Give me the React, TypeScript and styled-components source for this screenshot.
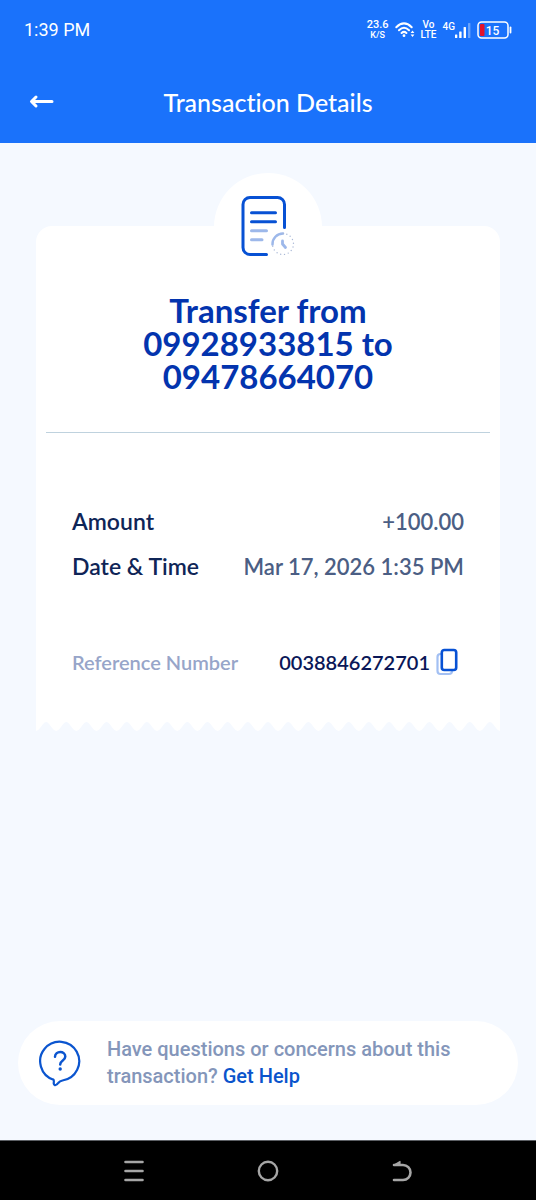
import React from "react";
import styled, { createGlobalStyle } from "styled-components";

const GlobalStyle = createGlobalStyle`
  *, *::before, *::after { box-sizing: border-box; }
  body { margin: 0; background: #f5f9ff; }
  button { border: 0; padding: 0; background: none; color: inherit; font: inherit; cursor: pointer; }
  svg { display: block; }
`;

const bodyFont = `Lato, "Liberation Sans", sans-serif`;
const systemFont = `Roboto, "Liberation Sans", sans-serif`;

const Page = styled.div`
  min-height: 100vh;
  display: flex;
  flex-direction: column;
  background: #f5f9ff;
  font-family: ${bodyFont};
  font-variant-ligatures: none;
`;

const Header = styled.header`
  background: #1a72fb;
  color: #fff;
`;

const StatusBar = styled.div`
  height: 60px;
  padding: 0 24px;
  display: flex;
  align-items: center;
  justify-content: space-between;
  font-family: ${systemFont};
`;

const Clock = styled.time`
  font-size: 18px;
  line-height: 24px;
`;

const StatusIcons = styled.div`
  display: flex;
  align-items: center;
  gap: 6px;
`;

const StackedLabel = styled.div`
  display: flex;
  flex-direction: column;
  align-items: center;
  font-size: 10px;
  line-height: 10px;
  font-weight: 500;
`;

const SpeedValue = styled.span`
  font-size: 11px;
`;

const SpeedUnit = styled.span`
  font-size: 9px;
`;

const Signal = styled.div`
  display: flex;
  align-items: flex-start;
  font-size: 10px;
  line-height: 10px;
  font-weight: 500;
`;

const TitleBar = styled.div`
  height: 83px;
  padding: 0 24px;
  display: grid;
  grid-template-columns: 36px 1fr 36px;
  align-items: center;
`;

const BackButton = styled.button`
  width: 36px;
  height: 36px;
  display: grid;
  place-items: center;
`;

const Title = styled.h1`
  margin: 0;
  font-size: 25px;
  line-height: 32px;
  font-weight: 500;
  text-align: center;
`;

const Main = styled.main`
  flex: 1;
  display: flex;
  flex-direction: column;
  padding: 30px 18px 35px;
`;

const Receipt = styled.article`
  margin: 0 18px 24px;
  display: flex;
  flex-direction: column;
`;

const Badge = styled.div`
  width: 108px;
  height: 108px;
  margin: 0 auto -55px;
  padding-top: 22px;
  border-radius: 50%;
  background: #fff;
  display: flex;
  justify-content: center;
  z-index: 1;
`;

const Paper = styled.div`
  padding: 68px 10px 43px;
  border-radius: 16px 16px 0 0;
  background: #fff;
`;

const Heading = styled.h2`
  margin: 0 auto;
  max-width: 280px;
  padding-bottom: 39px;
  color: #0334ae;
  font-size: 33px;
  line-height: 33px;
  font-weight: 700;
  text-align: center;
`;

const Divider = styled.hr`
  margin: 0;
  border: 0;
  border-top: 1px solid #bfd2de;
`;

const Details = styled.dl`
  margin: 0;
  padding: 72px 26px 0;
`;

const Row = styled.div<{ $gap?: number }>`
  display: flex;
  align-items: center;
  justify-content: space-between;
  height: 32px;
  margin-top: ${(p) => p.$gap ?? 0}px;
`;

const Term = styled.dt<{ $muted?: boolean }>`
  color: ${(p) => (p.$muted ? "#97a5c9" : "#0f2557")};
  font-size: ${(p) => (p.$muted ? 20 : 23)}px;
  font-weight: 600;
  white-space: nowrap;
`;

const Value = styled.dd<{ $strong?: boolean }>`
  margin: 0;
  display: flex;
  align-items: center;
  gap: 6px;
  padding-right: ${(p) => (p.$strong ? 6 : 0)}px;
  color: ${(p) => (p.$strong ? "#0a1757" : "#4b5e84")};
  font-size: ${(p) => (p.$strong ? 20 : 22)}px;
  font-weight: 600;
  white-space: nowrap;
`;

const TornEdge = styled.svg`
  width: 100%;
  height: 10px;
`;

const HelpCard = styled.aside`
  margin-top: auto;
  min-height: 84px;
  padding: 0 21px;
  display: flex;
  align-items: center;
  gap: 26px;
  border-radius: 42px;
  background: #fff;
`;

const HelpText = styled.p`
  margin: 0;
  max-width: 360px;
  color: #8496ba;
  font-family: ${systemFont};
  font-size: 20px;
  line-height: 27px;
  font-weight: 500;
`;

const HelpLink = styled.a`
  color: #0a54cc;
  text-decoration: none;
`;

const NavBar = styled.nav`
  height: 60px;
  padding: 0 67px;
  display: grid;
  grid-template-columns: repeat(3, 1fr);
  justify-items: center;
  align-items: center;
  background: #000;
  border-top: 1px solid #5c5f64;
  color: #a6a6a6;
`;

const NavButton = styled.button`
  width: 40px;
  height: 40px;
  display: grid;
  place-items: center;
`;

const TEETH = 23;
const tornPath =
  "M0 0V10" +
  Array.from({ length: TEETH }, (_, i) => {
    const x = i * 20;
    return `Q${x + 2} 10 ${x + 4} 7L${x + 7} 3Q${x + 10} -1 ${x + 13} 3L${x + 16} 7Q${x + 18} 10 ${x + 20} 10`;
  }).join("") +
  "V0Z";

const WifiIcon = () => (
  <svg width="20" height="18" viewBox="0 0 20 18" fill="none" stroke="#fff" strokeWidth="2" strokeLinecap="round" aria-label="Wi-Fi">
    <path d="M1.300 6.200Q9 -1.400 16.700 6.200M4 9.200Q9 4.400 14 9.200M6.600 12Q9 9.800 11.400 12" />
    <circle cx="9" cy="14.700" r="1.400" fill="#fff" stroke="none" />
    <path d="M17.500 9.500l1.900 2.400h-3.800zM17.500 16l1.900-2.400h-3.800z" fill="#fff" stroke="none" />
  </svg>
);

const BarsIcon = () => (
  <svg width="16" height="17" viewBox="0 0 16 17" fill="#fff" aria-label="Signal strength">
    <rect x="0" y="12.500" width="2.300" height="3.500" rx=".5" />
    <rect x="4.200" y="9.500" width="2.400" height="6.500" rx=".5" />
    <rect x="8.600" y="5" width="2.400" height="11" rx=".5" />
    <rect x="13" y="1" width="2.400" height="15" rx=".5" opacity=".35" />
  </svg>
);

const BatteryIcon = () => (
  <svg width="35" height="18" viewBox="0 0 35 18" aria-label="Battery 15 percent">
    <rect x="1" y="1" width="30" height="16" rx="3.500" fill="none" stroke="#fff" strokeWidth="1.500" />
    <rect x="3" y="3" width="4.500" height="12" rx="1" fill="#e3122c" />
    <path d="M33.500 6.500v5" stroke="#fff" strokeWidth="1.800" strokeLinecap="round" />
    <text x="15.500" y="13.500" textAnchor="middle" fill="#fff" fontFamily="Roboto, sans-serif" fontSize="12" fontWeight="500">15</text>
  </svg>
);

const BackArrow = () => (
  <svg width="26" height="16" viewBox="0 0 26 16" fill="none" stroke="#fff" strokeWidth="3" strokeLinecap="round" strokeLinejoin="round">
    <path d="M23 7.500H3M7 3L2.500 7.500L7 12" />
  </svg>
);

const ReceiptIcon = () => (
  <svg width="56" height="62" viewBox="0 0 56 62" fill="none" strokeLinecap="round">
    <path d="M26.500 59.500H10A7 7 0 0 1 3 52.500V9.500A7 7 0 0 1 10 2.500H37.500A7 7 0 0 1 44.500 9.500V32.500" stroke="#0751d4" strokeWidth="3" />
    <path d="M11.500 17.800H35.500M11.500 26.800H35.500" stroke="#0751d4" strokeWidth="3" />
    <path d="M11.500 35.800H26.500M11.500 44.800H22" stroke="#9db8ea" strokeWidth="3" />
    <path d="M32.500 49.500A10.500 10.500 0 0 1 43 38.500" stroke="#9db8ea" strokeWidth="2.500" />
    <path d="M43 38.500A10.500 10.500 0 1 1 32.500 49.500" stroke="#a9b8d6" strokeWidth="1.400" strokeDasharray="0 3.900" />
    <path d="M42.500 46V49L45.500 52.500" stroke="#9db8ea" strokeWidth="2.800" strokeLinejoin="round" />
  </svg>
);

const CopyIcon = () => (
  <svg width="22" height="28" viewBox="0 0 22 28" fill="none">
    <rect x="1.500" y="6" width="14.500" height="20" rx="3" stroke="#a3c0f3" strokeWidth="2.200" />
    <rect x="5.800" y="2" width="14.400" height="20" rx="2.500" fill="#fff" stroke="#0751d4" strokeWidth="2.600" />
  </svg>
);

const QuestionBubble = () => (
  <svg width="42" height="48" viewBox="0 0 42 48" fill="none" stroke="#0b55cf" strokeLinecap="round" strokeLinejoin="round">
    <path d="M14.500 40.700A19.500 19.500 0 1 1 23.500 41.500Q20.800 42 19.200 44L17.700 45.500C16 46.800 14.300 45.500 14.800 43.500Q15 41.600 14.500 40.700" strokeWidth="2.200" />
    <path d="M16 17.800C16.200 11.400 26.300 11.500 26.300 17.500C26.300 21.700 21.200 21.200 21.200 25.500" strokeWidth="2.500" />
    <circle cx="21.200" cy="30" r="1.700" fill="#0b55cf" stroke="none" />
  </svg>
);

const MenuGlyph = () => (
  <svg width="20" height="22" viewBox="0 0 20 22" stroke="currentColor" strokeWidth="2.600" strokeLinecap="round">
    <path d="M1.500 2H18.500M1.500 11H18.500M1.500 20H18.500" />
  </svg>
);

const HomeGlyph = () => (
  <svg width="22" height="22" viewBox="0 0 22 22" fill="none" stroke="currentColor" strokeWidth="2.400">
    <circle cx="11" cy="11" r="9.200" />
  </svg>
);

const ReturnGlyph = () => (
  <svg width="20" height="22" viewBox="0 0 20 22" fill="none" stroke="currentColor" strokeWidth="2.600" strokeLinecap="round" strokeLinejoin="round">
    <path d="M2 20H11A7.500 7.500 0 0 0 11 5H2" />
    <path d="M2 5L8 1.500V5Z" fill="currentColor" strokeWidth="1.200" />
  </svg>
);

export default function App() {
  return (
    <Page>
      <GlobalStyle />
      <Header>
        <StatusBar>
          <Clock>1:39 PM</Clock>
          <StatusIcons>
            <StackedLabel>
              <SpeedValue>23.6</SpeedValue>
              <SpeedUnit>K/S</SpeedUnit>
            </StackedLabel>
            <WifiIcon />
            <StackedLabel>
              <span>Vo</span>
              <span>LTE</span>
            </StackedLabel>
            <Signal>
              4G
              <BarsIcon />
            </Signal>
            <BatteryIcon />
          </StatusIcons>
        </StatusBar>
        <TitleBar>
          <BackButton type="button" aria-label="Back">
            <BackArrow />
          </BackButton>
          <Title>Transaction Details</Title>
        </TitleBar>
      </Header>
      <Main>
        <Receipt>
          <Badge>
            <ReceiptIcon />
          </Badge>
          <Paper>
            <Heading>Transfer from 09928933815 to 09478664070</Heading>
            <Divider />
            <Details>
              <Row>
                <Term>Amount</Term>
                <Value>+100.00</Value>
              </Row>
              <Row $gap={13}>
                <Term>Date &amp; Time</Term>
                <Value>Mar 17, 2026 1:35 PM</Value>
              </Row>
              <Row $gap={64}>
                <Term $muted>Reference Number</Term>
                <Value $strong>
                  0038846272701
                  <button type="button" aria-label="Copy reference number">
                    <CopyIcon />
                  </button>
                </Value>
              </Row>
            </Details>
          </Paper>
          <TornEdge viewBox="0 0 460 10" preserveAspectRatio="none" aria-hidden="true">
            <path d={tornPath} fill="#fff" />
          </TornEdge>
        </Receipt>
        <HelpCard>
          <QuestionBubble />
          <HelpText>
            Have questions or concerns about this transaction? <HelpLink href="#help">Get Help</HelpLink>
          </HelpText>
        </HelpCard>
      </Main>
      <NavBar aria-label="System navigation">
        <NavButton type="button" aria-label="Recent apps">
          <MenuGlyph />
        </NavButton>
        <NavButton type="button" aria-label="Home">
          <HomeGlyph />
        </NavButton>
        <NavButton type="button" aria-label="Go back">
          <ReturnGlyph />
        </NavButton>
      </NavBar>
    </Page>
  );
}
